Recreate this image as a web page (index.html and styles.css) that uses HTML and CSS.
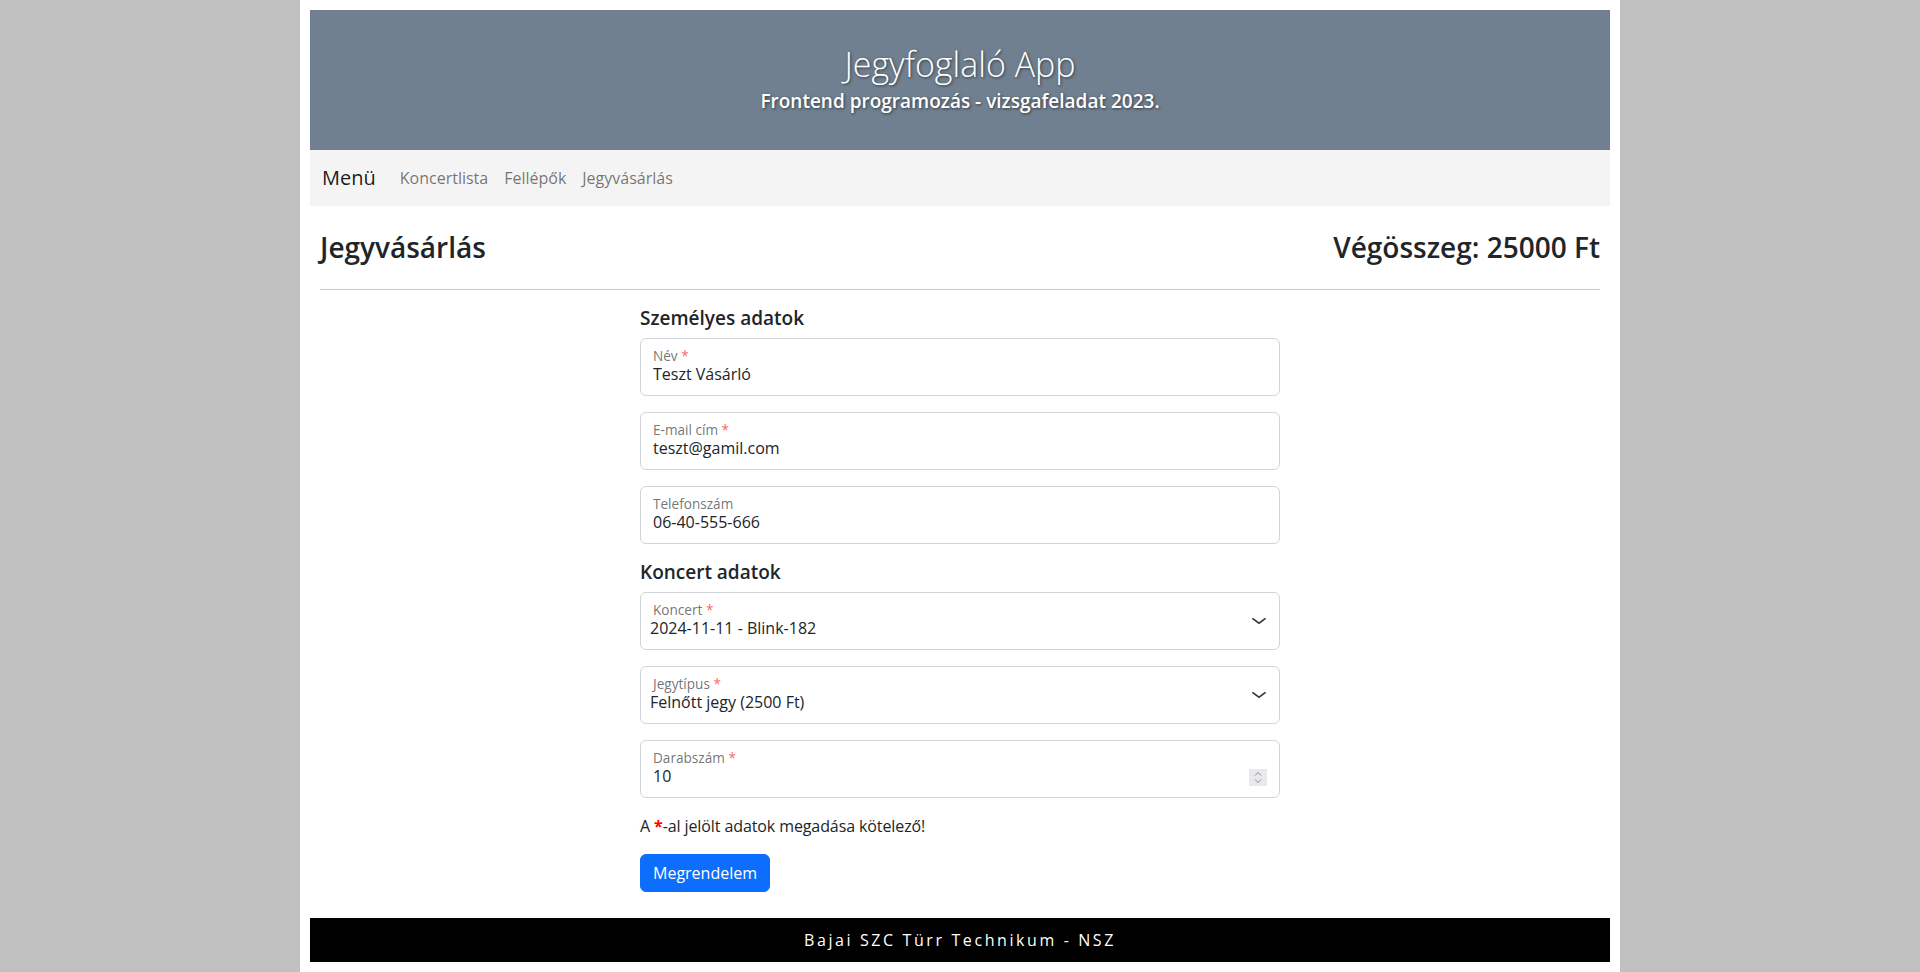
FILE: index.html
```html
<!DOCTYPE html>
<html lang="hu">
<head>
<meta charset="utf-8">
<title>Jegyfoglaló App</title>
<link rel="stylesheet" href="styles.css">
</head>
<body>
<div class="page">
  <header class="banner">
    <h1 class="banner-title">Jegyfoglaló App</h1>
    <p class="banner-sub">Frontend programozás - vizsgafeladat 2023.</p>
  </header>
  <nav class="menu">
    <span class="brand">Menü</span>
    <a class="menu-link" href="#">Koncertlista</a>
    <a class="menu-link" href="#">Fellépők</a>
    <a class="menu-link" href="#">Jegyvásárlás</a>
  </nav>
  <main class="content">
    <div class="title-row">
      <h2 class="page-title">Jegyvásárlás</h2>
      <h2 class="page-title">Végösszeg: 25000 Ft</h2>
    </div>
    <hr class="divider">
    <form class="order-form">
      <h3 class="section-title">Személyes adatok</h3>
      <div class="field">
        <div class="field-body">
          <label class="field-label">Név <span class="req">*</span></label>
          <input class="field-input" type="text" value="Teszt Vásárló">
        </div>
      </div>
      <div class="field">
        <div class="field-body">
          <label class="field-label">E-mail cím <span class="req">*</span></label>
          <input class="field-input" type="text" value="teszt@gamil.com">
        </div>
      </div>
      <div class="field">
        <div class="field-body">
          <label class="field-label">Telefonszám</label>
          <input class="field-input" type="text" value="06-40-555-666">
        </div>
      </div>
      <h3 class="section-title">Koncert adatok</h3>
      <div class="field">
        <div class="field-body">
          <label class="field-label">Koncert <span class="req">*</span></label>
          <select class="field-select"><option>2024-11-11 - Blink-182</option></select>
        </div>
        <svg class="chevron" width="16" height="12" viewBox="0 0 16 16" preserveAspectRatio="none"><path fill="none" stroke="#343a40" stroke-linecap="round" stroke-linejoin="round" stroke-width="2" d="m2 5 6 6 6-6"/></svg>
      </div>
      <div class="field">
        <div class="field-body">
          <label class="field-label">Jegytípus <span class="req">*</span></label>
          <select class="field-select"><option>Felnőtt jegy (2500 Ft)</option></select>
        </div>
        <svg class="chevron" width="16" height="12" viewBox="0 0 16 16" preserveAspectRatio="none"><path fill="none" stroke="#343a40" stroke-linecap="round" stroke-linejoin="round" stroke-width="2" d="m2 5 6 6 6-6"/></svg>
      </div>
      <div class="field">
        <div class="field-body">
          <label class="field-label">Darabszám <span class="req">*</span></label>
          <div class="value-row">
            <input class="field-input" type="text" value="10">
            <svg class="spinner" width="18" height="17" viewBox="0 0 18 17"><rect width="18" height="17" fill="#e9e9ed"/><path d="M6 6.5 9 3.5 12 6.5" fill="none" stroke="#8a8a90" stroke-width="1"/><path d="M6 10.5 9 13.5 12 10.5" fill="none" stroke="#8a8a90" stroke-width="1"/></svg>
          </div>
        </div>
      </div>
      <p class="note">A <span class="note-star">*</span>-al jelölt adatok megadása kötelező!</p>
      <button class="submit" type="button">Megrendelem</button>
    </form>
  </main>
  <footer class="foot">Bajai SZC Türr Technikum - NSZ</footer>
</div>
</body>
</html>
```
FILE: styles.css
```css
* { box-sizing: border-box; }
html, body { margin: 0; padding: 0; }
body {
  background: #c0c0c0;
  font-family: "Open Sans", "Noto Sans", sans-serif;
  font-size: 16px;
  color: #212529;
}
.page {
  width: 1320px;
  margin: 0 auto;
  background: #fff;
  padding: 10px;
}
.banner {
  height: 140px;
  background: #708090;
  color: #fff;
  display: flex;
  flex-direction: column;
  align-items: center;
  padding-top: 35px;
  gap: 6px;
}
.banner-title {
  margin: 0;
  font-size: 34px;
  line-height: 38px;
  font-weight: 300;
  text-shadow: 1px 1px 3px rgba(0,0,0,.55);
}
.banner-sub {
  margin: 0;
  font-size: 19px;
  line-height: 24px;
  font-weight: 600;
  text-shadow: 1px 1px 3px rgba(0,0,0,.55);
}
.menu {
  height: 56px;
  background: #f4f4f4;
  display: flex;
  align-items: center;
  padding: 0 12px;
}
.brand {
  font-size: 20px;
  line-height: 30px;
  margin-right: 16px;
  color: rgba(0,0,0,.9);
}
.menu-link {
  padding: 0 8px;
  font-size: 16px;
  line-height: 24px;
  color: rgba(0,0,0,.55);
  text-decoration: none;
}
.content {
  padding: 24px 10px 0;
}
.title-row {
  display: flex;
  justify-content: space-between;
  align-items: baseline;
}
.page-title {
  margin: 0;
  font-size: 28px;
  line-height: 34px;
  font-weight: 600;
}
.divider {
  margin: 25px 0 16px;
  border: 0;
  border-top: 1px solid #c8c9ca;
}
.order-form {
  width: 640px;
  margin: 0 auto;
}
.section-title {
  margin: 0 0 8px;
  font-size: 19px;
  line-height: 24px;
  font-weight: 600;
}
.field {
  height: 58px;
  border: 1px solid #ced4da;
  border-radius: 6px;
  margin-bottom: 16px;
  padding: 0 12px;
  display: flex;
  align-items: center;
}
.field-body {
  flex: 1;
  align-self: stretch;
  display: flex;
  flex-direction: column;
  padding-top: 9px;
}
.field-label {
  font-size: 13.6px;
  line-height: 16px;
  color: rgba(33,37,41,.65);
}
.req { color: rgba(255,0,0,.65); }
.field-input, .field-select {
  border: 0;
  outline: 0;
  padding: 0;
  margin: 0;
  background: transparent;
  font-family: inherit;
  font-size: 16px;
  line-height: 20px;
  height: 20px;
  color: #212529;
  width: 100%;
}
.field-select {
  appearance: none;
  -webkit-appearance: none;
  margin-left: -3px;
}
.value-row {
  display: flex;
  align-items: center;
  gap: 4px;
}
.spinner { flex: none; margin-top: 2px; }
.chevron { flex: none; }
.note {
  margin: 0 0 16px;
  line-height: 24px;
  letter-spacing: -0.1px;
}
.note-star { color: #f00; font-weight: 700; }
.submit {
  display: block;
  height: 38px;
  padding: 0 12px;
  border: 1px solid #0d6efd;
  border-radius: 6px;
  background: #0d6efd;
  color: #fff;
  font-family: inherit;
  font-size: 16px;
  line-height: 24px;
}
.foot {
  margin-top: 26px;
  height: 44px;
  background: #000;
  color: #fff;
  text-align: center;
  font-size: 16px;
  line-height: 44px;
  letter-spacing: 2.6px;
}
```
